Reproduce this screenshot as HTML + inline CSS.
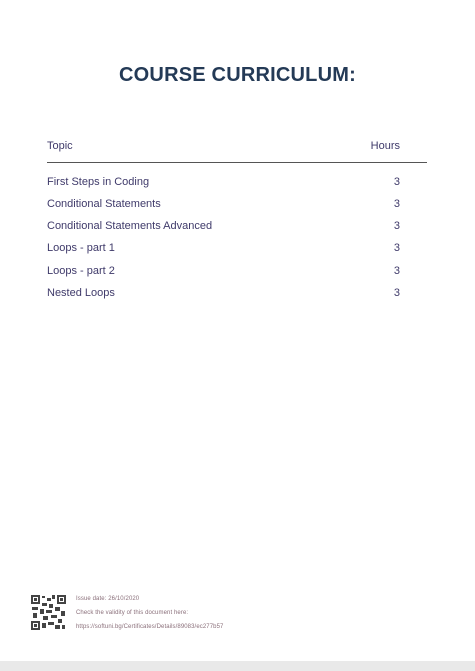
<!DOCTYPE html>
<html><head><style>
body{margin:0;width:475px;height:671px;background:#fff;position:relative;overflow:hidden;font-family:"Liberation Sans",sans-serif;}
.t{position:absolute;left:0;width:475px;top:64px;text-align:center;font-size:20px;font-weight:bold;color:#243a56;letter-spacing:0.2px;}
.r{position:absolute;left:47px;width:353px;font-size:11px;color:#3f3a6a;}
.r span{position:absolute;right:0;}
.line{position:absolute;left:47px;width:380px;top:162px;height:1px;background:#555;}
.band{position:absolute;left:0;top:661px;width:475px;height:10px;background:#e9e9e9;}
.f{position:absolute;left:76px;font-size:6px;color:#8a6f7a;letter-spacing:0.1px;}
</style></head><body>
<div class="t">COURSE CURRICULUM:</div>
<div class="r" style="top:140px">Topic<span>Hours</span></div>
<div class="line"></div>
<div class="r" style="top:176px">First Steps in Coding<span style="right:0">3</span></div>
<div class="r" style="top:198px">Conditional Statements<span>3</span></div>
<div class="r" style="top:220px">Conditional Statements Advanced<span>3</span></div>
<div class="r" style="top:242px">Loops - part 1<span>3</span></div>
<div class="r" style="top:265px">Loops - part 2<span>3</span></div>
<div class="r" style="top:287px">Nested Loops<span>3</span></div>
<svg style="position:absolute;left:31px;top:595px" width="35" height="35" viewBox="0 0 35 35">
<rect width="35" height="35" fill="#fff"/>
<g fill="#444">
<rect x="0" y="0" width="9" height="9"/><rect x="26" y="0" width="9" height="9"/><rect x="0" y="26" width="9" height="9"/>
</g>
<g fill="#fff"><rect x="2" y="2" width="5" height="5"/><rect x="28" y="2" width="5" height="5"/><rect x="2" y="28" width="5" height="5"/></g>
<g fill="#444"><rect x="3" y="3" width="3" height="3"/><rect x="29" y="3" width="3" height="3"/><rect x="3" y="29" width="3" height="3"/>
<rect x="11" y="1" width="3" height="2"/><rect x="16" y="3" width="4" height="3"/><rect x="21" y="0" width="3" height="4"/>
<rect x="11" y="8" width="5" height="3"/><rect x="18" y="9" width="4" height="4"/><rect x="1" y="12" width="6" height="3"/>
<rect x="9" y="14" width="4" height="5"/><rect x="15" y="15" width="6" height="3"/><rect x="24" y="12" width="5" height="4"/>
<rect x="30" y="16" width="4" height="5"/><rect x="2" y="18" width="4" height="5"/><rect x="12" y="21" width="5" height="4"/>
<rect x="20" y="20" width="6" height="3"/><rect x="27" y="24" width="4" height="4"/><rect x="11" y="28" width="4" height="5"/>
<rect x="17" y="27" width="6" height="3"/><rect x="24" y="30" width="5" height="4"/><rect x="31" y="30" width="3" height="4"/>
</g></svg>
<div class="f" style="top:596px">Issue date: 26/10/2020</div>
<div class="f" style="top:610px">Check the validity of this document here:</div>
<div class="f" style="top:624px">https://softuni.bg/Certificates/Details/89083/ec277b57</div>
<div class="band"></div>
</body></html>
